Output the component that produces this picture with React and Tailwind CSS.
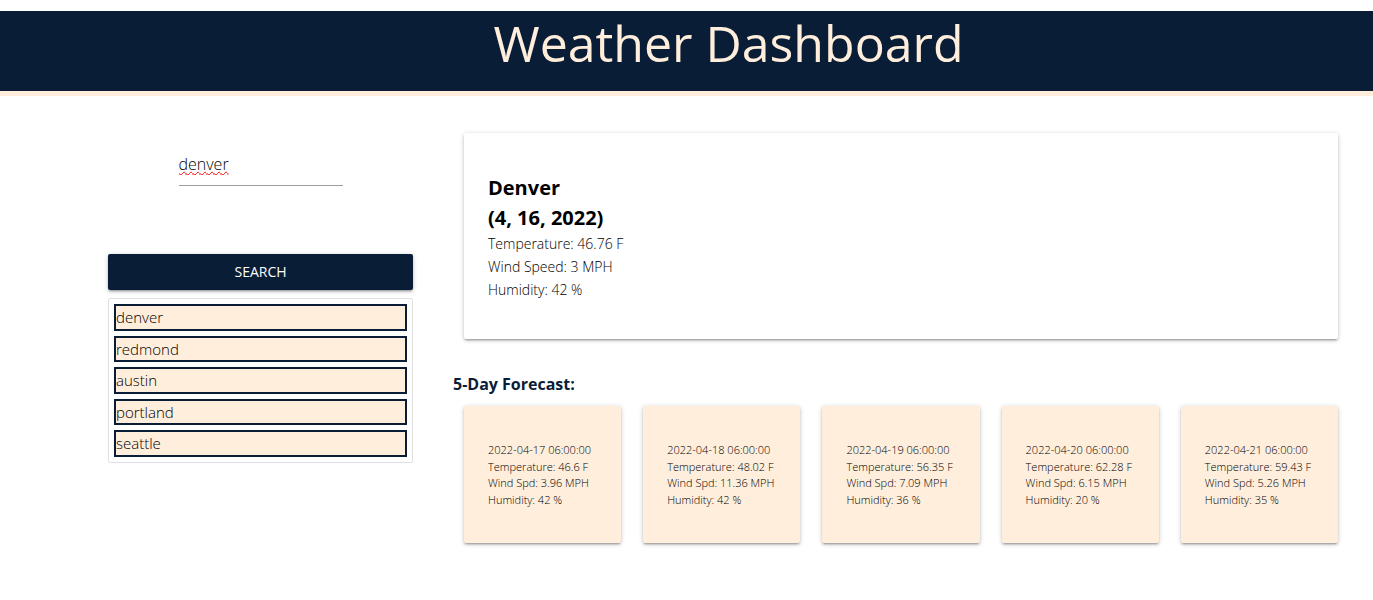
import { useState } from 'react';

const cities = ['denver', 'redmond', 'austin', 'portland', 'seattle'];

const forecast = [
  { time: '2022-04-17 06:00:00', temp: '46.6', wind: '3.96', humidity: 42 },
  { time: '2022-04-18 06:00:00', temp: '48.02', wind: '11.36', humidity: 42 },
  { time: '2022-04-19 06:00:00', temp: '56.35', wind: '7.09', humidity: 36 },
  { time: '2022-04-20 06:00:00', temp: '62.28', wind: '6.15', humidity: 20 },
  { time: '2022-04-21 06:00:00', temp: '59.43', wind: '5.26', humidity: 35 },
];

function Card({ className, children }) {
  return (
    <div
      className={`rounded-xs px-6 shadow-[0_2px_2px_0_rgba(0,0,0,0.14),0_3px_1px_-2px_rgba(0,0,0,0.12),0_1px_5px_0_rgba(0,0,0,0.2)] ${className}`}
    >
      {children}
    </div>
  );
}

function SearchPanel() {
  const [query, setQuery] = useState('denver');
  return (
    <aside className="w-[305px] shrink-0 pt-2">
      <form onSubmit={(e) => e.preventDefault()}>
        <input
          type="text"
          aria-label="City"
          spellCheck={false}
          value={query}
          onChange={(e) => setQuery(e.target.value)}
          className="mx-auto block h-[45px] w-[164px] border-b border-[#9e9e9e] bg-transparent pt-0.5 text-base font-light text-black underline decoration-[#ff0000] decoration-wavy decoration-1 underline-offset-1 outline-none"
        />
        <button
          type="submit"
          className="mt-17 h-9 w-full rounded-xs bg-[#0a1d37] text-sm text-white shadow-[0_2px_2px_0_rgba(0,0,0,0.14),0_3px_1px_-2px_rgba(0,0,0,0.12),0_1px_5px_0_rgba(0,0,0,0.2)]"
        >
          SEARCH
        </button>
      </form>
      <ul className="mt-2 flex flex-col gap-[5px] rounded-xs border border-[#e0e0e0] p-[5px] text-[15px] leading-normal font-light text-black">
        {cities.map((city) => (
          <li key={city} className="border-2 border-[#0a1d37] bg-[#ffeedb]">
            {city}
          </li>
        ))}
      </ul>
    </aside>
  );
}

export default function App() {
  return (
    <div className="bg-white pt-[11px] pb-12 font-['Open_Sans','Noto_Sans',sans-serif] text-black">
      <header className="h-[85px] border-b-[5px] border-[#ffeedb] bg-[#0a1d37] pl-[84px]">
        <h1 className="text-center text-[50px] leading-16 text-[#ffeedb]">Weather Dashboard</h1>
      </header>
      <main className="flex gap-10 pt-[37px] pr-6 pl-[108px]">
        <SearchPanel />
        <div className="min-w-0 flex-1">
          <section className="px-[11px]">
            <Card className="bg-white pt-10 pb-[38px]">
              <h2 className="text-xl leading-[30px] font-bold">
                Denver
                <br />
                (4, 16, 2022)
              </h2>
              <div className="text-sm leading-[1.625] font-light">
                <p>Temperature: 46.76 F</p>
                <p>Wind Speed: 3 MPH</p>
                <p>Humidity: 42 %</p>
              </div>
            </Card>
          </section>
          <section>
            <h2 className="mt-8 mb-2 text-base leading-[27px] font-bold text-[#0a1d37]">5-Day Forecast:</h2>
            <div className="grid grid-cols-5 gap-[22px] px-[11px]">
              {forecast.map((day) => (
                <Card key={day.time} className="bg-[#ffeedb] pt-9 pb-[35px] text-[11px] leading-normal font-light whitespace-nowrap">
                  <p>{day.time}</p>
                  <p>Temperature: {day.temp} F</p>
                  <p>Wind Spd: {day.wind} MPH</p>
                  <p>Humidity: {day.humidity} %</p>
                </Card>
              ))}
            </div>
          </section>
        </div>
      </main>
    </div>
  );
}
